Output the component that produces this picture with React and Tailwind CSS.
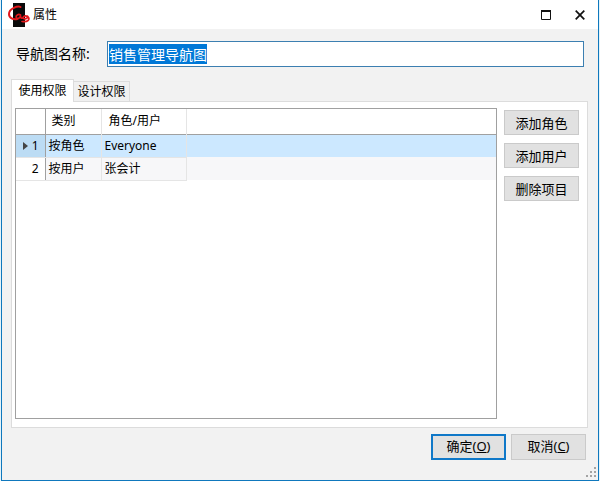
import React, { useEffect, useRef, useState } from "react";

const permissions = [
  { id: 1, type: "按角色", target: "Everyone" },
  { id: 2, type: "按用户", target: "张会计" },
];

const sideActions = ["添加角色", "添加用户", "删除项目"];

const Logo = () => (
  <svg viewBox="0 0 22 24" className="w-[22px] h-6" aria-hidden="true">
    <rect x="5" y="0" width="12" height="24" fill="#0a0a0a" />
    <g fill="none" stroke="#e3171b" strokeLinecap="round">
      <path d="M12.500 4C10 2.500 1 5.500 1 11C1 15 5 17 9.500 16" strokeWidth="2" />
      <path d="M12.500 12C10.500 10.500 7.500 12.500 8.200 14.500C9 16.500 12.500 15 12.500 12.500C12.500 14.500 13 15.500 14.500 15" strokeWidth="1.700" />
      <path d="M19.500 13.500C17 12 14.500 13.500 15.500 15.200C16.500 16.500 19.500 15.500 20 13.800C22 16 20.500 19.500 14 18.500" strokeWidth="1.700" />
    </g>
  </svg>
);

const Room = () => {
  const nameRef = useRef(null);
  const [name, setName] = useState("销售管理导航图");
  const [tab, setTab] = useState("use");
  const [selected, setSelected] = useState(1);

  useEffect(() => {
    nameRef.current.focus();
    nameRef.current.select();
  }, []);

  return (
    <div className="min-h-screen flex px-px bg-[#e3f3fa]">
      <main className="flex-1 min-w-0 flex flex-col border-x border-b border-[#0f78bd] bg-[#f2f2f2] text-black text-xs font-['Noto_Sans','Noto_Sans_CJK_SC',sans-serif]">
        <header className="h-[29px] flex items-center bg-white pl-[6px] pr-[10px]">
          <Logo />
          <h1 className="pl-[3px] flex-1">属性</h1>
          <button type="button" aria-label="最大化" className="w-4 h-4 mr-[18px] flex items-center justify-center">
            <svg viewBox="0 0 10 10" className="w-[10px] h-[10px]" fill="none" stroke="#111">
              <path d="M.5 .5V9.500H9.500V.5" />
              <path d="M0 1H10" strokeWidth="2" />
            </svg>
          </button>
          <button type="button" aria-label="关闭" className="w-4 h-4 flex items-center justify-center">
            <svg viewBox="0 0 10 10" className="w-[10px] h-[10px]" fill="none" stroke="#111" strokeWidth="1.7">
              <path d="M.7 .7L9.300 9.300M9.300 .7L.7 9.300" />
            </svg>
          </button>
        </header>

        <form className="flex-1 flex flex-col" onSubmit={(e) => e.preventDefault()}>
          <div className="flex items-center pt-3 px-[14px] text-sm">
            <label htmlFor="name" className="w-[91px]">
              导航图名称:
            </label>
            <input
              ref={nameRef}
              type="text"
              id="name"
              value={name}
              onChange={(e) => setName(e.target.value)}
              className="flex-1 min-w-0 h-[26px] px-px leading-5 bg-white border border-[#3c7fb1] outline-none selection:bg-[#0078d7] selection:text-white"
            />
          </div>

          <div className="flex-1 flex flex-col pt-3 pl-[9px] pr-[10px]">
            <div role="tablist" className="flex items-end">
              <button
                type="button"
                role="tab"
                aria-selected={tab === "use"}
                onClick={() => setTab("use")}
                className="w-[63px] h-[23px] -mb-px relative bg-white border border-b-0 border-[#dcdcdc]"
              >
                使用权限
              </button>
              <button
                type="button"
                role="tab"
                aria-selected={tab === "design"}
                onClick={() => setTab("design")}
                className="w-14 h-5 bg-[#f0f0f0] border border-l-0 border-b-0 border-[#dcdcdc]"
              >
                设计权限
              </button>
            </div>

            <div role="tabpanel" className="flex-1 flex gap-[7px] bg-white border border-[#dcdcdc] pt-[6px] pb-2 pl-[3px] pr-2">
              <div className="flex-1 border border-[#a0a0a0]">
                <table className="w-full table-fixed border-collapse text-left">
                  <colgroup>
                    <col className="w-[29px]" />
                    <col className="w-14" />
                    <col className="w-[85px]" />
                    <col />
                  </colgroup>
                  <thead>
                    <tr className="h-[25px] border-b border-[#a0a0a0]">
                      <td className="border-r border-[#a0a0a0]"></td>
                      <th className="font-normal pl-[6px] border-r border-[#e5e5e5]">类别</th>
                      <th className="font-normal pl-[7px] border-r border-[#e5e5e5]">角色/用户</th>
                      <td></td>
                    </tr>
                  </thead>
                  <tbody>
                    {permissions.map((row) => (
                      <tr
                        key={row.id}
                        onClick={() => setSelected(row.id)}
                        className={selected === row.id ? "h-[23px] bg-[#cce8ff]" : "h-[23px] bg-[#f7f7f9]"}
                      >
                        <th
                          className={
                            selected === row.id
                              ? "font-normal border-r border-b border-[#a0a0a0] border-b-[#e5e5e5] bg-[#bcdcf4]"
                              : "font-normal border-r border-b border-[#a0a0a0] border-b-[#e5e5e5] bg-white"
                          }
                        >
                          <span className="flex items-center justify-end gap-1 pr-[6px]">
                            {selected === row.id && (
                              <svg viewBox="0 0 5 8" className="w-[5px] h-2" fill="#444">
                                <path d="M0 0L5 4L0 8Z" />
                              </svg>
                            )}
                            {row.id}
                          </span>
                        </th>
                        <td className="pl-[3px] border-r border-b border-[#e5e5e5]">{row.type}</td>
                        <td className="pl-[3px] border-r border-b border-[#e5e5e5]">{row.target}</td>
                        <td></td>
                      </tr>
                    ))}
                  </tbody>
                </table>
              </div>
              <div className="flex flex-col gap-2 pt-[2px]">
                {sideActions.map((action) => (
                  <button
                    key={action}
                    type="button"
                    className="w-[75px] h-[25px] text-[13px] leading-5 bg-[#e1e1e1] border border-[#cacaca]"
                  >
                    {action}
                  </button>
                ))}
              </div>
            </div>
          </div>

          <footer className="flex flex-col pt-[6px]">
            <div className="flex justify-end gap-[5px] pr-3 text-[13px]">
              <button type="submit" className="w-[75px] h-[26px] bg-[#e1e1e1] border-2 border-[#0f78c8]">
                确定(<u>O</u>)
              </button>
              <button type="button" className="w-[75px] h-[26px] bg-[#e1e1e1] border border-[#cacaca]">
                取消(<u>C</u>)
              </button>
            </div>
            <div className="flex justify-end h-5 items-end pr-[2px] pb-[3px]">
              <svg viewBox="0 0 10 10" className="w-[10px] h-[10px]" fill="#a3a3a3" aria-hidden="true">
                <path d="M8 0h2v2h-2zM4 4h2v2h-2zM8 4h2v2h-2zM0 8h2v2h-2zM4 8h2v2h-2zM8 8h2v2h-2z" />
              </svg>
            </div>
          </footer>
        </form>
      </main>
    </div>
  );
};

export default Room;
